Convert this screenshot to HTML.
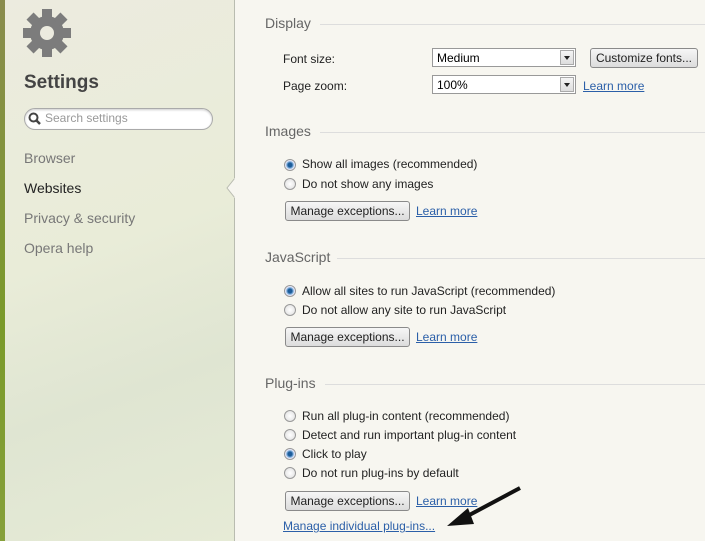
<!DOCTYPE html>
<html><head><style>
body{margin:0;width:705px;height:541px;overflow:hidden;font-family:"Liberation Sans",sans-serif;background:#f7f6f0;position:relative}
.a{position:absolute;white-space:nowrap}
#side{position:absolute;left:0;top:0;width:234px;height:541px;background:linear-gradient(160deg,#ecebdf 0%,#e9ecd8 45%,#dfe5d2 70%,#e6ebd6 100%);border-right:1px solid #b9bcb0}
#strip{position:absolute;left:0;top:0;width:5px;height:541px;background:linear-gradient(#8a8c4e,#7a9a2a 60%,#86a03a)}
.nav{font-size:14px;color:#777;left:24px}
.h{font-size:14px;color:#666;left:265px}
.hl{position:absolute;height:1px;background:#ddd;right:0}
.t{font-size:12px;color:#222}
.btn{position:absolute;height:18px;border:1px solid #8a8a8a;border-radius:3px;background:linear-gradient(#f6f6f6,#dcdcdc);font-size:12px;color:#222;line-height:18px;text-align:center}
.sel{position:absolute;height:19px;border:1px solid #999;background:#fff;font-size:12px;line-height:19px;padding-left:4px;box-sizing:border-box}
.sel i{position:absolute;right:1px;top:1px;width:14px;height:15px;border:1px solid #aaa;background:linear-gradient(#f5f5f5,#ddd);box-sizing:border-box}
.sel i:after{content:"";position:absolute;left:3px;top:5px;border:3px solid transparent;border-top:4px solid #222}
.lm{font-size:12px;color:#2b5fa8;text-decoration:underline}
.r{position:absolute;width:10px;height:10px;border-radius:50%;border:1px solid #999;background:radial-gradient(#fff,#ddd)}
.r.on{background:radial-gradient(#1d5c9a 0 2px,#6aa0d0 3px,#eef 4.5px)}
</style></head><body>
<div id="side"></div><div id="strip"></div>
<svg class="a" style="left:23px;top:9px" width="48" height="48" viewBox="-24 -24 48 48">
<g fill="#7c7c7c"><circle r="17"/>
<g id="tt"><rect x="-5" y="-24" width="10" height="10"/></g>
<use href="#tt" transform="rotate(45)"/><use href="#tt" transform="rotate(90)"/><use href="#tt" transform="rotate(135)"/><use href="#tt" transform="rotate(180)"/><use href="#tt" transform="rotate(225)"/><use href="#tt" transform="rotate(270)"/><use href="#tt" transform="rotate(315)"/></g>
<circle r="7" fill="#ecebdf"/></svg>
<div class="a" style="left:24px;top:72px;font-size:19px;font-weight:bold;color:#444">Settings</div>
<div class="a" style="left:24px;top:108px;width:187px;height:20px;border:1px solid #aaa;border-radius:11px;background:#fff;box-shadow:inset 0 1px 2px #ccc"></div>
<svg class="a" style="left:28px;top:112px" width="14" height="14"><circle cx="5.5" cy="5.5" r="4" fill="none" stroke="#444" stroke-width="2"/><line x1="8.5" y1="8.5" x2="12" y2="12" stroke="#444" stroke-width="2.5"/></svg>
<div class="a" style="left:45px;top:111px;font-size:12px;color:#999">Search settings</div>
<div class="a nav" style="top:150px">Browser</div>
<div class="a nav" style="top:180px;color:#222">Websites</div>
<div class="a nav" style="top:210px">Privacy &amp; security</div>
<div class="a nav" style="top:240px">Opera help</div>
<svg class="a" style="left:226px;top:178px" width="10" height="20"><path d="M9 0 L1 10 L9 20 Z" fill="#f7f6f0" stroke="#b9bcb0"/><rect x="8.5" y="0" width="2" height="20" fill="#f7f6f0"/></svg>

<div class="a h" style="top:15px">Display</div><div class="hl" style="left:320px;top:24px"></div>
<div class="a t" style="left:283px;top:52px">Font size:</div>
<div class="sel" style="left:432px;top:48px;width:144px">Medium<i></i></div>
<div class="btn" style="left:590px;top:48px;width:106px">Customize fonts...</div>
<div class="a t" style="left:283px;top:79px">Page zoom:</div>
<div class="sel" style="left:432px;top:75px;width:144px">100%<i></i></div>
<div class="a lm" style="left:583px;top:79px">Learn more</div>

<div class="a h" style="top:123px">Images</div><div class="hl" style="left:320px;top:132px"></div>
<div class="r on" style="left:284px;top:159px"></div><div class="a t" style="left:302px;top:157px">Show all images (recommended)</div>
<div class="r" style="left:284px;top:178px"></div><div class="a t" style="left:302px;top:177px">Do not show any images</div>
<div class="btn" style="left:285px;top:201px;width:123px">Manage exceptions...</div>
<div class="a lm" style="left:416px;top:204px">Learn more</div>

<div class="a h" style="top:249px">JavaScript</div><div class="hl" style="left:337px;top:258px"></div>
<div class="r on" style="left:284px;top:285px"></div><div class="a t" style="left:302px;top:284px">Allow all sites to run JavaScript (recommended)</div>
<div class="r" style="left:284px;top:304px"></div><div class="a t" style="left:302px;top:303px">Do not allow any site to run JavaScript</div>
<div class="btn" style="left:285px;top:327px;width:123px">Manage exceptions...</div>
<div class="a lm" style="left:416px;top:330px">Learn more</div>

<div class="a h" style="top:375px">Plug-ins</div><div class="hl" style="left:325px;top:384px"></div>
<div class="r" style="left:284px;top:410px"></div><div class="a t" style="left:302px;top:409px">Run all plug-in content (recommended)</div>
<div class="r" style="left:284px;top:429px"></div><div class="a t" style="left:302px;top:428px">Detect and run important plug-in content</div>
<div class="r on" style="left:284px;top:448px"></div><div class="a t" style="left:302px;top:447px">Click to play</div>
<div class="r" style="left:284px;top:467px"></div><div class="a t" style="left:302px;top:466px">Do not run plug-ins by default</div>
<div class="btn" style="left:285px;top:491px;width:123px">Manage exceptions...</div>
<div class="a lm" style="left:416px;top:494px">Learn more</div>
<div class="a lm" style="left:283px;top:519px">Manage individual plug-ins...</div>
<svg class="a" style="left:440px;top:480px" width="90" height="52"><line x1="80" y1="8" x2="20" y2="40" stroke="#111" stroke-width="4"/><path d="M7 46 L28 28 L34 44 Z" fill="#111"/></svg>
</body></html>
